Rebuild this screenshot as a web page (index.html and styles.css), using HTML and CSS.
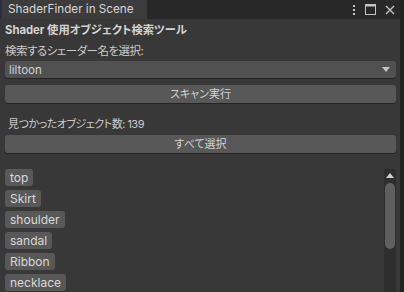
FILE: index.html
```html
<!DOCTYPE html>
<html lang="ja">
<head>
  <meta charset="UTF-8" />
  <title>ShaderFinder in Scene</title>
  <link rel="stylesheet" href="styles.css">
</head>
<body>
  <div class="window">
    <div class="tabbar">
      <div class="tab">ShaderFinder in Scene</div>
      <div class="tab-tools">
        <svg width="4" height="12" viewBox="0 0 4 12"><rect x="1" y="1" width="2" height="2" fill="#c4c4c4"/><rect x="1" y="5" width="2" height="2" fill="#c4c4c4"/><rect x="1" y="9" width="2" height="2" fill="#c4c4c4"/></svg>
        <svg width="11" height="11" viewBox="0 0 11 11"><rect x="0.5" y="0.5" width="10" height="10" fill="none" stroke="#c4c4c4"/><rect x="0.5" y="0.5" width="10" height="2" fill="#c4c4c4"/></svg>
        <svg width="10" height="10" viewBox="0 0 10 10"><path d="M1 1L9 9M9 1L1 9" stroke="#c4c4c4" stroke-width="1.4"/></svg>
      </div>
    </div>

    <div class="content">
      <div class="title">Shader 使用オブジェクト検索ツール</div>
      <div class="label">検索するシェーダー名を選択:</div>
      <div class="dropdown">
        <span>liltoon</span>
        <svg width="8" height="5" viewBox="0 0 8 5"><path d="M0 0H8L4 5Z" fill="#c4c4c4"/></svg>
      </div>
      <div class="btn scan">スキャン実行</div>

      <div class="count">見つかったオブジェクト数: 139</div>
      <div class="btn">すべて選択</div>

      <div class="list-area">
        <div class="list">
          <div class="item">top</div>
          <div class="item">Skirt</div>
          <div class="item">shoulder</div>
          <div class="item">sandal</div>
          <div class="item">Ribbon</div>
          <div class="item">necklace</div>
        </div>
        <div class="scrollbar">
          <svg width="8" height="5" viewBox="0 0 8 5"><path d="M0 5H8L4 0Z" fill="#d0d0d0"/></svg>
          <div class="thumb"></div>
        </div>
      </div>
    </div>
  </div>
</body>
</html>
```

FILE: styles.css
```css
body {
  margin: 0;
  width: 404px;
  height: 292px;
  overflow: hidden;
  background-color: #232323;
  font-family: Inter, "Noto Sans CJK JP", sans-serif;
  font-feature-settings: "palt";
  font-size: 11px;
  color: #cbcbcb;
}
.window {
  width: 400px;
  height: 292px;
  background: #383838;
  overflow: hidden;
}
.tabbar {
  height: 19px;
  background: #282828;
  display: flex;
  justify-content: space-between;
}
.tab {
  width: 147px;
  background: #3c3c3c;
  border-left: 2px solid #2d2b45;
  padding-left: 6px;
  box-sizing: border-box;
  line-height: 19px;
  font-size: 11.7px;
  white-space: nowrap;
  color: #d6d6d6;
}
.tab-tools {
  display: flex;
  align-items: center;
  gap: 9px;
  padding-right: 5px;
}
.content {
  padding: 2px 4px 0 5px;
}
.title {
  height: 18px;
  line-height: 18px;
  font-weight: bold;
  font-size: 11.3px;
  white-space: nowrap;
  color: #d4d4d4;
}
.label {
  margin-top: 3px;
  height: 18px;
  line-height: 18px;
  font-size: 11.5px;
  letter-spacing: -0.5px;
}
.dropdown {
  margin-top: 1px;
  height: 17px;
  background: #515151;
  border-radius: 3px;
  box-shadow: 0 1px 0 #242424;
  display: flex;
  align-items: center;
  justify-content: space-between;
  padding: 0 6px 0 4px;
  font-size: 11.5px;
  color: #d2d2d2;
}
.btn {
  height: 18px;
  line-height: 18px;
  background: #585858;
  border-radius: 3px;
  box-shadow: 0 1px 0 #242424;
  text-align: center;
  font-size: 11px;
  color: #d2d2d2;
}
.scan {
  margin-top: 7px;
}
.count {
  margin-top: 12px;
  margin-bottom: 2px;
  padding-left: 3px;
  height: 18px;
  line-height: 18px;
  font-size: 11px;
  letter-spacing: -0.5px;
}
.list-area {
  margin-top: 16px;
  display: flex;
  justify-content: space-between;
}
.list {
  display: flex;
  flex-direction: column;
  align-items: flex-start;
  gap: 4px;
}
.item {
  height: 17px;
  line-height: 17px;
  padding: 0 5px;
  background: #585858;
  border-radius: 3px;
  font-size: 12px;
  color: #d8d8d8;
}
.scrollbar {
  width: 12px;
  height: 130px;
  background: #2e2e2e;
  display: flex;
  flex-direction: column;
  align-items: center;
  padding-top: 4px;
  box-sizing: border-box;
}
.thumb {
  margin-top: 5px;
  width: 10px;
  height: 66px;
  background: #5f5f5f;
  border-radius: 5px;
}
```
